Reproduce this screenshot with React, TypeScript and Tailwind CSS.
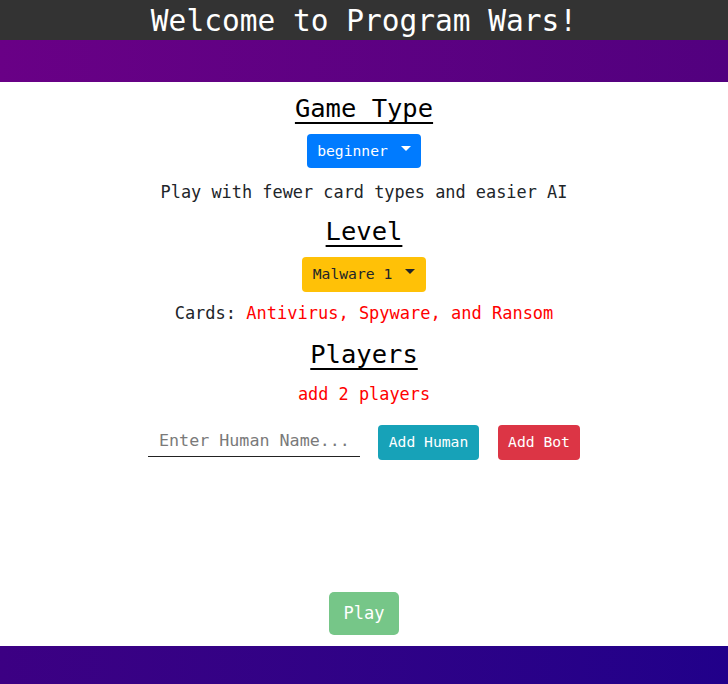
import React from "react";

const mono = { fontFamily: '"DejaVu Sans Mono", "Liberation Mono", monospace' };

function Caret({ color }: { color: string }) {
  return (
    <span
      className={`ml-[13px] inline-block h-0 w-0 border-x-[5px] border-t-[5px] border-x-transparent ${color} -translate-y-[3px]`}
    />
  );
}

export default function App() {
  return (
    <div className="flex min-h-screen flex-col bg-white" style={mono}>
      <header className="flex h-[40px] items-center justify-center bg-[#333333] pt-[4px]">
        <h1 className="text-[29.5px] leading-none text-white">Welcome to Program Wars!</h1>
      </header>
      <div className="h-[42px] bg-gradient-to-r from-[#690086] to-[#52007f]" />
      <main className="flex flex-1 flex-col items-center">
        <h3 className="mt-[6px] flex h-[40px] items-center text-[25.5px] text-black underline decoration-2 underline-offset-[5px]">
          Game Type
        </h3>
        <button className="mt-[6px] flex h-[34px] w-[114px] items-center justify-center rounded-[4px] bg-[#007bff] text-[14.7px] text-white">
          beginner
          <Caret color="border-t-white" />
        </button>
        <p className="mt-[12px] flex h-[26px] items-center text-[16.9px] text-[#212529]">
          Play with fewer card types and easier AI
        </p>
        <h3 className="mt-[5px] flex h-[40px] items-center text-[25.5px] text-black underline decoration-2 underline-offset-[5px]">
          Level
        </h3>
        <button className="mt-[6px] flex h-[35px] w-[124px] items-center justify-center rounded-[4px] bg-[#ffc107] text-[14.7px] text-[#212529]">
          Malware 1
          <Caret color="border-t-[#212529]" />
        </button>
        <p className="mt-[9px] flex h-[26px] items-center text-[17px] text-[#212529]">
          Cards:&nbsp;<span className="text-[#ff0000]">Antivirus, Spyware, and Ransom</span>
        </p>
        <h3 className="mt-[7px] flex h-[40px] items-center text-[25.5px] text-black underline decoration-2 underline-offset-[5px]">
          Players
        </h3>
        <p className="mt-[8px] flex h-[26px] items-center text-[16.9px] text-[#ff0000]">add 2 players</p>
        <div className="mt-[17px] flex h-[35px] items-center">
          <input
            placeholder="Enter Human Name..."
            className="h-[32px] w-[212px] translate-y-[-2px] border-b border-[#222] bg-transparent pl-[11px] text-[16.7px] text-[#212529] outline-none placeholder:text-[#7a7a7a]"
            style={mono}
          />
          <button className="ml-[18px] flex h-[35px] w-[101px] items-center justify-center rounded-[4px] bg-[#17a2b8] text-[14.7px] text-white">
            Add Human
          </button>
          <button className="ml-[19px] flex h-[35px] w-[82px] items-center justify-center rounded-[4px] bg-[#dc3545] text-[14.7px] text-white">
            Add Bot
          </button>
        </div>
        <button className="mb-[11px] mt-auto flex h-[43px] w-[70px] items-center justify-center rounded-[5px] bg-[#76c688] text-[17px] text-white">
          Play
        </button>
      </main>
      <footer className="h-[38px] bg-gradient-to-r from-[#3c0083] to-[#21008a]" />
    </div>
  );
}
